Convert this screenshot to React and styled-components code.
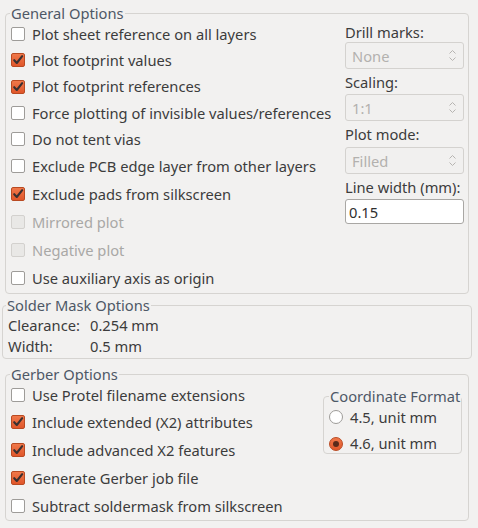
import React from "react";
import styled, { createGlobalStyle, css } from "styled-components";

const Global = createGlobalStyle`
  html, body { margin: 0; padding: 0; background: #f2f1f0; }
  body { font-family: "Noto Sans", "DejaVu Sans", sans-serif; font-size: 14.7px; color: #3c3c3c; }
  * { box-sizing: border-box; }
`;

const Page = styled.div`
  width: 478px;
  height: 528px;
  background: #f2f1f0;
  display: flex;
  flex-direction: column;
  overflow: hidden;
`;

const Group = styled.fieldset`
  margin: ${(p) => p.$margin || "0"};
  padding: 0;
  border: 1px solid #d6d4d1;
  border-radius: 4px;
  min-width: 0;
  height: ${(p) => p.$h}px;
`;

const Legend = styled.legend`
  padding: 0 1px;
  margin-left: ${(p) => p.$ml ?? 4}px;
  color: #4e5866;
  font-size: 14.7px;
  line-height: 16px;
  white-space: nowrap;
`;

const GeneralBody = styled.div`
  display: flex;
  justify-content: space-between;
`;

const CheckList = styled.div`
  display: flex;
  flex-direction: column;
  padding-left: 5px;
`;

const Row = styled.label`
  display: flex;
  align-items: center;
  gap: 7px;
  height: ${(p) => p.$h || 27}px;
  line-height: 17px;
  white-space: nowrap;
  color: ${(p) => (p.$disabled ? "#a9a8a6" : "#3c3c3c")};
`;

const Box = styled.span`
  width: 14px;
  height: 14px;
  flex: none;
  border-radius: 2px;
  display: flex;
  align-items: center;
  justify-content: center;
  ${(p) =>
    p.$checked
      ? css`
          background: linear-gradient(#f0784a, #e0562a);
          border: 1px solid #b94a22;
        `
      : p.$disabled
      ? css`
          background: #e9e8e6;
          border: 1px solid #d3d1ce;
        `
      : css`
          background: #ffffff;
          border: 1px solid #9e9c99;
        `}
`;

const Check = ({ checked, disabled, label, h }) => (
  <Row $disabled={disabled} $h={h}>
    <Box $checked={checked} $disabled={disabled}>
      {checked && (
        <svg width="12" height="12" viewBox="0 0 12 12">
          <path d="M2.2 6.2 L4.8 9 L10.2 2.2" fill="none" stroke="#3a3030" strokeWidth="2.1" strokeLinecap="round" strokeLinejoin="round" />
        </svg>
      )}
    </Box>
    {label}
  </Row>
);

const SideCol = styled.div`
  width: 119px;
  margin-right: 4px;
  display: flex;
  flex-direction: column;
`;

const SideLabel = styled.div`
  height: ${(p) => p.$h || 26}px;
  display: flex;
  align-items: center;
  color: #3c3c3c;
`;

const Select = styled.div`
  height: 27px;
  border: 1px solid #d4d2cf;
  border-radius: 3px;
  background: #f1f0ef;
  color: #b3b1ae;
  display: flex;
  align-items: center;
  justify-content: space-between;
  padding: 0 7px 0 6px;
`;

const Arrows = () => (
  <svg width="7" height="13" viewBox="0 0 7 13">
    <path d="M0.5 4.5 L3.5 1.5 L6.5 4.5" fill="none" stroke="#b6b4b1" strokeWidth="1" />
    <path d="M0.5 8.5 L3.5 11.5 L6.5 8.5" fill="none" stroke="#b6b4b1" strokeWidth="1" />
  </svg>
);

const Input = styled.div`
  height: 25px;
  border: 1px solid #a9a7a4;
  border-radius: 3px;
  background: #ffffff;
  color: #2f2f2f;
  display: flex;
  align-items: center;
  padding-left: 3px;
`;

const MaskRow = styled.div`
  display: grid;
  grid-template-columns: 82px auto;
  height: ${(p) => p.$h}px;
  line-height: 16px;
  align-items: center;
  padding-left: 5px;
`;

const GerberBody = styled.div`
  display: flex;
  justify-content: space-between;
`;

const CoordGroup = styled.fieldset`
  margin: 6px 6px 0 0;
  padding: 0 0 0 5px;
  border: 1px solid #d6d4d1;
  border-radius: 4px;
  width: 139px;
  height: 66px;
  align-self: flex-start;
  min-width: 0;
`;

const Dot = styled.span`
  width: 14px;
  height: 14px;
  flex: none;
  border-radius: 50%;
  display: flex;
  align-items: center;
  justify-content: center;
  ${(p) =>
    p.$checked
      ? css`
          background: linear-gradient(#f0784a, #e0562a);
          border: 1px solid #b94a22;
        `
      : css`
          background: #ffffff;
          border: 1px solid #9e9c99;
        `}
`;

const Pip = styled.span`
  width: 6px;
  height: 6px;
  border-radius: 50%;
  background: #5a2a1a;
`;

const Radio = ({ checked, label, h }) => (
  <Row $h={h}>
    <Dot $checked={checked}>{checked && <Pip />}</Dot>
    {label}
  </Row>
);

export default function App() {
  return (
    <Page>
      <Global />
      <Group $margin="5px 9px 0 5px" $h={289}>
        <Legend>General Options</Legend>
        <GeneralBody>
          <CheckList>
            <Check label="Plot sheet reference on all layers" h={26} />
            <Check checked label="Plot footprint values" h={26.5} />
            <Check checked label="Plot footprint references" h={26.5} />
            <Check label="Force plotting of invisible values/references" h={26} />
            <Check label="Do not tent vias" h={26.5} />
            <Check label="Exclude PCB edge layer from other layers" h={27.5} />
            <Check checked label="Exclude pads from silkscreen" h={28} />
            <Check disabled label="Mirrored plot" h={28} />
            <Check disabled label="Negative plot" h={28} />
            <Check label="Use auxiliary axis as origin" h={28} />
          </CheckList>
          <SideCol>
            <SideLabel $h={21}>Drill marks:</SideLabel>
            <Select>None<Arrows /></Select>
            <SideLabel $h={25}>Scaling:</SideLabel>
            <Select>1:1<Arrows /></Select>
            <SideLabel $h={26}>Plot mode:</SideLabel>
            <Select>Filled<Arrows /></Select>
            <SideLabel $h={25}>Line width (mm):</SideLabel>
            <Input>0.15</Input>
          </SideCol>
        </GeneralBody>
      </Group>
      <Group $margin="3px 6px 0 2px" $h={62}>
        <Legend $ml={3}>Solder Mask Options</Legend>
        <MaskRow $h={24}>
          <span>Clearance:</span>
          <span>0.254 mm</span>
        </MaskRow>
        <MaskRow $h={18}>
          <span>Width:</span>
          <span>0.5 mm</span>
        </MaskRow>
      </Group>
      <Group $margin="7px 9px 0 5px" $h={155}>
        <Legend>Gerber Options</Legend>
        <GerberBody>
          <CheckList>
            <Check label="Use Protel filename extensions" h={26} />
            <Check checked label="Include extended (X2) attributes" h={28} />
            <Check checked label="Include advanced X2 features" h={28} />
            <Check checked label="Generate Gerber job file" h={28} />
            <Check label="Subtract soldermask from silkscreen" h={28} />
          </CheckList>
          <CoordGroup>
            <Legend $ml={0}>Coordinate Format</Legend>
            <Radio label="4.5, unit mm" h={26} />
            <Radio checked label="4.6, unit mm" h={27} />
          </CoordGroup>
        </GerberBody>
      </Group>
    </Page>
  );
}
